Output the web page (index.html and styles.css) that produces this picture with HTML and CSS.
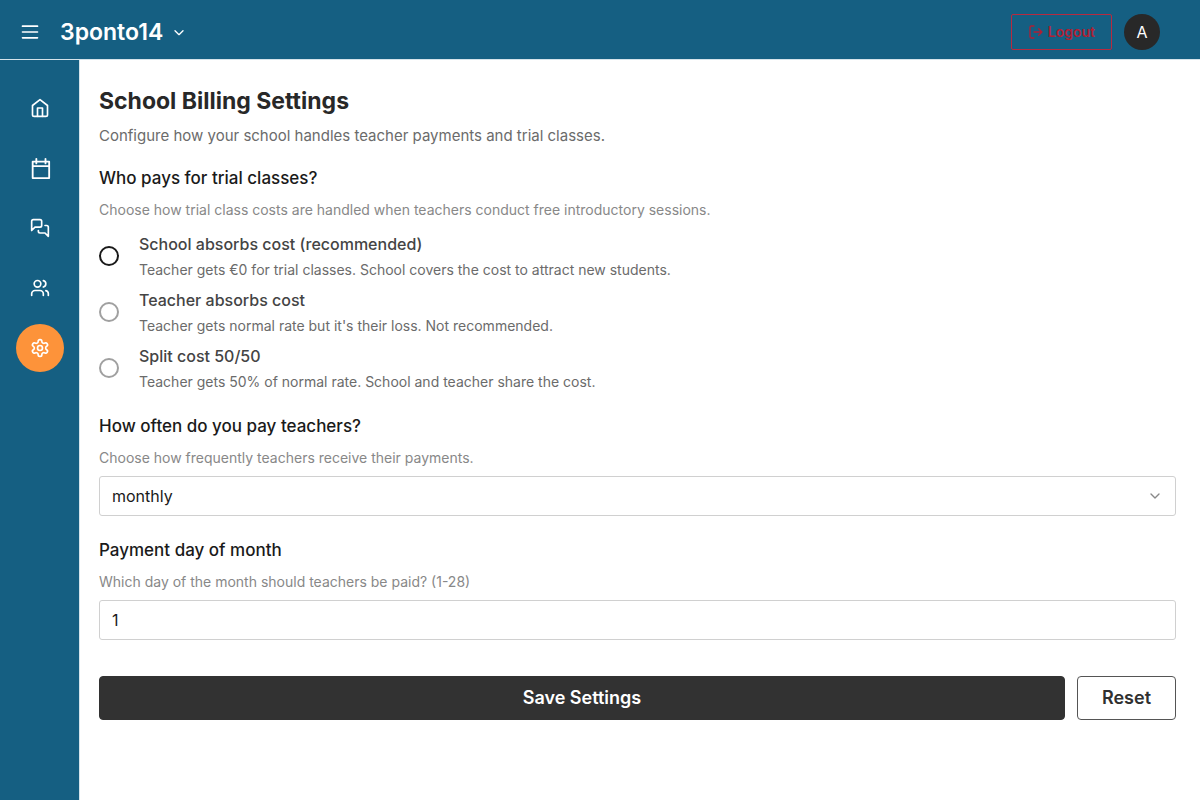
FILE: index.html
```html
<!DOCTYPE html>
<html lang="en">
<head>
<meta charset="utf-8">
<meta name="viewport" content="width=device-width, initial-scale=1">
<title>School Billing Settings</title>
<link rel="stylesheet" href="styles.css">
</head>
<body>
<header class="topbar">
  <button class="icon-button" type="button" aria-label="Menu">
    <svg class="icon" viewBox="0 0 24 24"><path d="M3 5h18M3 12h18M3 19h18"/></svg>
  </button>
  <button class="brand" type="button">3ponto14
    <svg class="icon icon-small" viewBox="0 0 24 24"><path d="m6 10 6 6 6-6"/></svg>
  </button>
  <button class="logout" type="button">
    <svg class="icon icon-small" viewBox="0 0 24 24"><path d="M9 21H5a2 2 0 0 1-2-2V5a2 2 0 0 1 2-2h4M16 17l5-5-5-5M21 12H9"/></svg>
    Logout
  </button>
  <button class="avatar" type="button" aria-label="Account">A</button>
</header>
<div class="shell">
  <nav class="sidebar" aria-label="Main">
    <a class="nav-link" href="#home" aria-label="Home"><svg class="icon" viewBox="0 0 24 24"><path d="m3 9 9-7 9 7v11a2 2 0 0 1-2 2H5a2 2 0 0 1-2-2z"/><path d="M9 22V12h6v10"/></svg></a>
    <a class="nav-link" href="#calendar" aria-label="Calendar"><svg class="icon icon-large" viewBox="0 0 24 24"><path d="M4 5h18v18H4zM8 2v5M18 2v5M4 10h18"/></svg></a>
    <a class="nav-link" href="#messages" aria-label="Messages"><svg class="icon" viewBox="0 0 24 24"><path d="M14 9a2 2 0 0 1-2 2H6l-4 4V4a2 2 0 0 1 2-2h8a2 2 0 0 1 2 2z"/><path d="M18 9h2a2 2 0 0 1 2 2v11l-4-4h-6a2 2 0 0 1-2-2v-1"/></svg></a>
    <a class="nav-link" href="#people" aria-label="People"><svg class="icon" viewBox="0 0 24 24"><path d="M16 21v-2a4 4 0 0 0-4-4H6a4 4 0 0 0-4 4v2"/><circle cx="9" cy="7" r="4"/><path d="M22 21v-2a4 4 0 0 0-3-3.870M16 3.130a4 4 0 0 1 0 7.750"/></svg></a>
    <a class="nav-link nav-link-active" href="#settings" aria-label="Settings" aria-current="page"><svg class="icon" viewBox="0 0 24 24"><path d="M12.220 2h-.44a2 2 0 0 0-2 2v.18a2 2 0 0 1-1 1.730l-.43.25a2 2 0 0 1-2 0l-.15-.08a2 2 0 0 0-2.730.73l-.22.38a2 2 0 0 0 .73 2.730l.15.1a2 2 0 0 1 1 1.720v.51a2 2 0 0 1-1 1.740l-.15.09a2 2 0 0 0-.73 2.730l.22.38a2 2 0 0 0 2.730.73l.15-.08a2 2 0 0 1 2 0l.43.25a2 2 0 0 1 1 1.730V20a2 2 0 0 0 2 2h.44a2 2 0 0 0 2-2v-.18a2 2 0 0 1 1-1.730l.43-.25a2 2 0 0 1 2 0l.15.08a2 2 0 0 0 2.730-.73l.22-.39a2 2 0 0 0-.73-2.730l-.15-.08a2 2 0 0 1-1-1.740v-.5a2 2 0 0 1 1-1.740l.15-.09a2 2 0 0 0 .73-2.730l-.22-.38a2 2 0 0 0-2.730-.73l-.15.08a2 2 0 0 1-2 0l-.43-.25a2 2 0 0 1-1-1.730V4a2 2 0 0 0-2-2z"/><circle cx="12" cy="12" r="3"/></svg></a>
  </nav>
  <main class="content">
    <h1 class="title">School Billing Settings</h1>
    <p class="lead">Configure how your school handles teacher payments and trial classes.</p>
    <form class="form">
      <fieldset class="group">
        <legend class="group-title">Who pays for trial classes?</legend>
        <p class="hint">Choose how trial class costs are handled when teachers conduct free introductory sessions.</p>
        <div class="options">
          <label class="option"><input class="radio radio-focus" type="radio" name="trial"><span class="option-text"><span class="option-title">School absorbs cost (recommended)</span><span class="option-note">Teacher gets €0 for trial classes. School covers the cost to attract new students.</span></span></label>
          <label class="option"><input class="radio" type="radio" name="trial"><span class="option-text"><span class="option-title">Teacher absorbs cost</span><span class="option-note">Teacher gets normal rate but it's their loss. Not recommended.</span></span></label>
          <label class="option"><input class="radio" type="radio" name="trial"><span class="option-text"><span class="option-title">Split cost 50/50</span><span class="option-note">Teacher gets 50% of normal rate. School and teacher share the cost.</span></span></label>
        </div>
      </fieldset>
      <div class="group">
        <label class="group-title" for="frequency">How often do you pay teachers?</label>
        <p class="hint">Choose how frequently teachers receive their payments.</p>
        <div class="select-wrap">
          <select class="field" id="frequency"><option>monthly</option><option>weekly</option></select>
          <svg class="icon icon-small select-arrow" viewBox="0 0 24 24"><path d="m6 9 6 6 6-6"/></svg>
        </div>
      </div>
      <div class="group">
        <label class="group-title" for="day">Payment day of month</label>
        <p class="hint">Which day of the month should teachers be paid? (1-28)</p>
        <input class="field" id="day" type="text" inputmode="numeric" value="1">
      </div>
      <div class="actions">
        <button class="button button-primary" type="submit">Save Settings</button>
        <button class="button" type="reset">Reset</button>
      </div>
    </form>
  </main>
</div>
</body>
</html>
```
FILE: styles.css
```css
* { box-sizing: border-box; }
body {
  margin: 0;
  min-height: 100vh;
  display: flex;
  flex-direction: column;
  background: #fff;
  color: #1a1a1a;
  font-family: Inter, "Liberation Sans", sans-serif;
  font-size: 16px;
}
button, input, select { font: inherit; color: inherit; }
button { cursor: pointer; }
h1, p { margin: 0; }

.icon {
  width: 20px;
  height: 20px;
  flex: none;
  fill: none;
  stroke: currentColor;
  stroke-width: 2;
  stroke-linecap: round;
  stroke-linejoin: round;
}
.icon-small { width: 16px; height: 16px; }
.icon-large { width: 22px; height: 22px; }

.topbar {
  display: flex;
  align-items: center;
  height: 60px;
  padding: 4px 40px 0 20px;
  background: #155f82;
  border-bottom: 1px solid #d5e3ea;
  color: #fff;
}
.icon-button, .brand { background: none; border: 0; padding: 0; display: flex; align-items: center; }
.brand { margin-left: 20px; gap: 8px; font-size: 23px; line-height: 32px; font-weight: 600; }
.logout {
  display: flex;
  align-items: center;
  justify-content: center;
  gap: 4px;
  height: 36px;
  margin-left: auto;
  padding: 0 16px;
  background: none;
  border: 1px solid #b82a3f;
  border-radius: 2px;
  color: #b01f34;
  font-size: 14px;
  font-weight: 600;
}
.avatar {
  width: 36px;
  height: 36px;
  margin-left: 12px;
  padding: 0;
  border: 0;
  border-radius: 50%;
  background: #282828;
}

.shell { display: flex; flex: 1; }
.sidebar {
  width: 80px;
  flex: none;
  display: flex;
  flex-direction: column;
  align-items: center;
  gap: 12px;
  padding-top: 24px;
  background: #155f82;
  border-right: 1px solid #d5e3ea;
}
.nav-link {
  width: 48px;
  height: 48px;
  display: flex;
  align-items: center;
  justify-content: center;
  border-radius: 50%;
  color: #fff;
}
.nav-link-active { background: #fd933a; }

.content { flex: 1; padding: 24px 24px 24px 19px; }
.title { font-size: 23px; line-height: 34px; font-weight: 700; color: #282828; }
.lead { margin-top: 6px; font-size: 15px; line-height: 24px; color: #6b6b6b; }
.form { display: flex; flex-direction: column; gap: 20px; margin-top: 16px; }
.group { display: block; min-width: 0; margin: 0; padding: 0; border: 0; }
.group-title { display: block; padding: 0; font-size: 17px; line-height: 28px; font-weight: 500; }
.hint { margin: 8px 0; font-size: 14px; line-height: 20px; color: #888; }
.options { display: flex; flex-direction: column; gap: 8px; margin-top: 12px; }
.option { display: flex; align-items: center; gap: 20px; }
.option-text { display: flex; flex-direction: column; gap: 4px; }
.option-title { line-height: 24px; font-weight: 500; color: #444; }
.option-note { font-size: 14px; line-height: 20px; color: #6b6b6b; }
.radio {
  appearance: none;
  width: 20px;
  height: 20px;
  flex: none;
  margin: 0;
  border: 2px solid #a0a0a0;
  border-radius: 50%;
  background: #fff;
}
.radio:checked { box-shadow: inset 0 0 0 4px #fff; background: #282828; }
.radio-focus { border-color: #1a1a1a; }
.select-wrap { display: grid; align-items: center; }
.select-wrap > * { grid-area: 1 / 1; }
.select-arrow { justify-self: end; margin-right: 13px; color: #888; pointer-events: none; }
.field {
  appearance: none;
  display: block;
  width: 100%;
  height: 40px;
  padding: 0 12px;
  border: 1px solid #d0d0d0;
  border-radius: 3px;
  background: #fff;
}
.actions { display: flex; gap: 12px; margin-top: 16px; }
.button {
  height: 44px;
  padding: 0 24px;
  border: 1px solid #555;
  border-radius: 4px;
  background: #fff;
  color: #303030;
  font-size: 18px;
  line-height: 24px;
  font-weight: 600;
}
.button-primary { flex: 1; border-color: #323232; background: #323232; color: #fff; }
```
